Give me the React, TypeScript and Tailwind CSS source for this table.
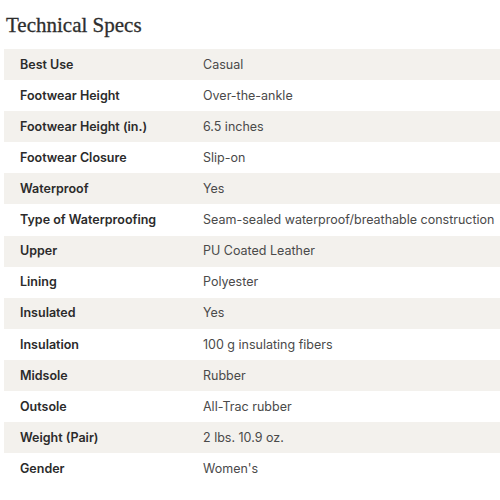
const specs: [string, string][] = [
  ['Best Use', 'Casual'],
  ['Footwear Height', 'Over-the-ankle'],
  ['Footwear Height (in.)', '6.5 inches'],
  ['Footwear Closure', 'Slip-on'],
  ['Waterproof', 'Yes'],
  ['Type of Waterproofing', 'Seam-sealed waterproof/breathable construction'],
  ['Upper', 'PU Coated Leather'],
  ['Lining', 'Polyester'],
  ['Insulated', 'Yes'],
  ['Insulation', '100 g insulating fibers'],
  ['Midsole', 'Rubber'],
  ['Outsole', 'All-Trac rubber'],
  ['Weight (Pair)', '2 lbs. 10.9 oz.'],
  ['Gender', "Women's"],
]

export default function App() {
  return (
    <div className="h-[500px] w-[500px] overflow-hidden bg-white font-['Inter',sans-serif]">
      <h2 className="pl-[6px] pt-[11px] font-['Liberation_Serif',serif] text-[21px] leading-[28px] text-[#2e2e2e] [-webkit-text-stroke:0.3px_#2e2e2e]">
        Technical Specs
      </h2>
      <div className="ml-[4px] mt-[10px] w-[520px]">
        {specs.map(([label, value], i) => (
          <div
            key={label}
            className={`flex h-[31.1px] items-center pt-[1px] text-[12.5px] ${i % 2 === 0 ? 'bg-[#f3f1ed]' : 'bg-white'}`}
          >
            <div className="w-[199px] shrink-0 pl-[16px] font-semibold text-[#2b2b2b]">{label}</div>
            <div className="whitespace-nowrap text-[#4a4a4a]">{value}</div>
          </div>
        ))}
      </div>
    </div>
  )
}
